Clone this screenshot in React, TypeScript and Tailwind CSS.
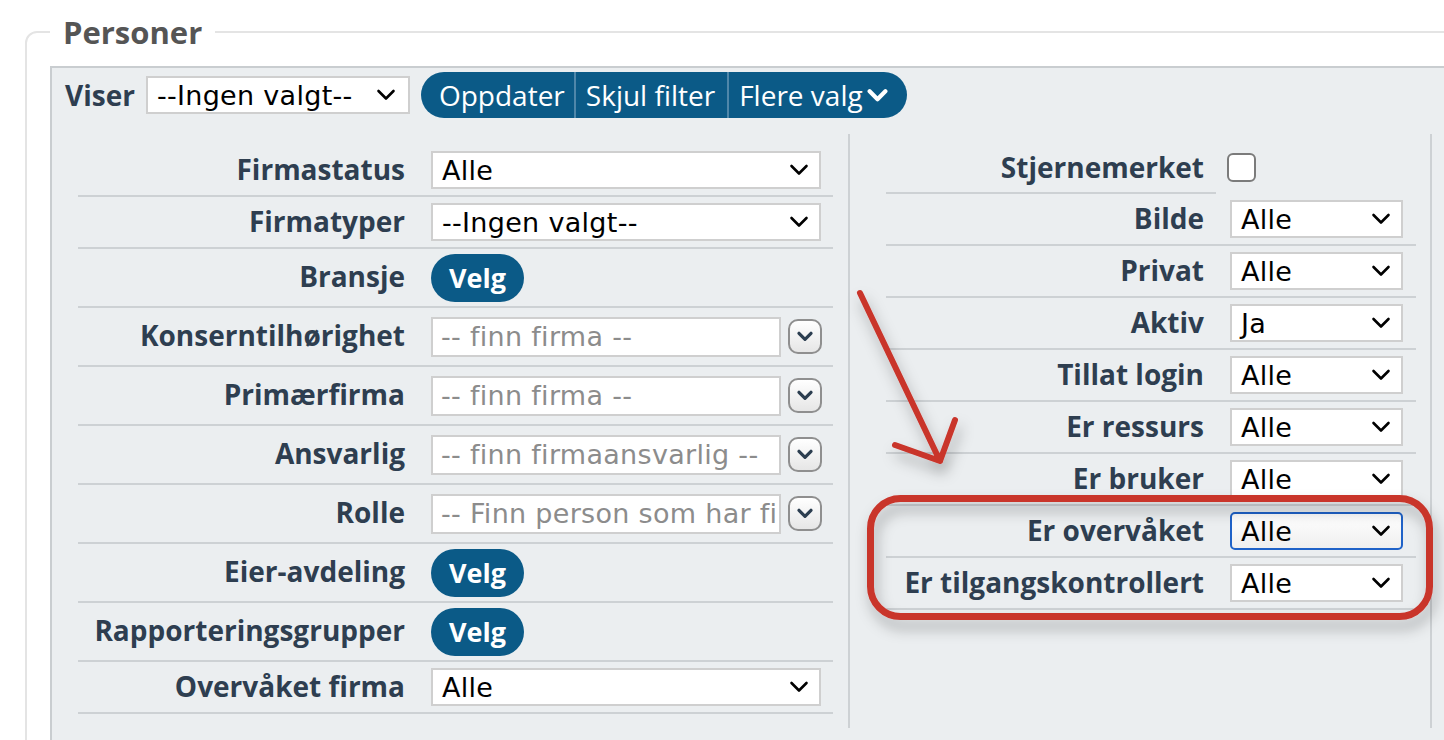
import type { ReactNode } from 'react'

type LeftRow =
  | { label: string; kind: 'select'; value: string }
  | { label: string; kind: 'velg' }
  | { label: string; kind: 'lookup'; value: string }

const leftRows: LeftRow[] = [
  { label: 'Firmastatus', kind: 'select', value: 'Alle' },
  { label: 'Firmatyper', kind: 'select', value: '--Ingen valgt--' },
  { label: 'Bransje', kind: 'velg' },
  { label: 'Konserntilhørighet', kind: 'lookup', value: '-- finn firma --' },
  { label: 'Primærfirma', kind: 'lookup', value: '-- finn firma --' },
  { label: 'Ansvarlig', kind: 'lookup', value: '-- finn firmaansvarlig --' },
  { label: 'Rolle', kind: 'lookup', value: '-- Finn person som har firmarolle --' },
  { label: 'Eier-avdeling', kind: 'velg' },
  { label: 'Rapporteringsgrupper', kind: 'velg' },
  { label: 'Overvåket firma', kind: 'select', value: 'Alle' },
]

const rightRows = [
  { label: 'Bilde', value: 'Alle' },
  { label: 'Privat', value: 'Alle' },
  { label: 'Aktiv', value: 'Ja' },
  { label: 'Tillat login', value: 'Alle' },
  { label: 'Er ressurs', value: 'Alle' },
  { label: 'Er bruker', value: 'Alle' },
  { label: 'Er overvåket', value: 'Alle', focused: true },
  { label: 'Er tilgangskontrollert', value: 'Alle' },
]

function Chevron({ className, width = 2.6 }: { className?: string; width?: number }) {
  return (
    <svg viewBox="0 0 20 12" className={className} fill="none" stroke="currentColor" strokeWidth={width} strokeLinecap="round" strokeLinejoin="round">
      <path d="M2.5 2l7.5 7.5L17.5 2" />
    </svg>
  )
}

function Dropdown({ value, className, focused }: { value: string; className: string; focused?: boolean }) {
  return (
    <div
      className={`flex items-center justify-between h-[38px] pl-[9px] pr-[10px] font-['DejaVu_Sans',sans-serif] text-[27px] tracking-[0.3px] text-black leading-none border-2 ${
        focused ? 'border-[#1f62c8] rounded-[5px] bg-gradient-to-b from-white to-[#efefef]' : 'border-[#cfcfcf] bg-white'
      } ${className}`}
    >
      <span className="whitespace-nowrap">{value}</span>
      <Chevron className="w-[20px] h-[12px] shrink-0" />
    </div>
  )
}

function VelgButton() {
  return (
    <button className="h-[48px] w-[93px] rounded-full bg-[#0b5a87] text-white font-bold text-[27px] leading-none">Velg</button>
  )
}

function Lookup({ value }: { value: string }) {
  return (
    <div className="flex items-center">
      <div className="w-[350px] h-[40px] border-2 border-[#cfcfcf] bg-white pl-[8px] flex items-center overflow-hidden whitespace-nowrap font-['DejaVu_Sans',sans-serif] text-[27px] tracking-[0.3px] text-[#8c8c8c] leading-none">
        {value}
      </div>
      <button className="ml-[7px] w-[34px] h-[35px] rounded-[10px] border-2 border-[#8f8f8f] bg-gradient-to-b from-white to-[#e6e6e6] flex items-center justify-center text-[#2c3e50]">
        <Chevron className="w-[16px] h-[11px]" width={4} />
      </button>
    </div>
  )
}

function Label({ children }: { children: ReactNode }) {
  return <span className="font-bold text-[28px] text-[#2e3e50] leading-none whitespace-nowrap">{children}</span>
}

export default function App() {
  return (
    <div className="relative h-[740px] w-[1444px] overflow-hidden bg-white font-['Open_Sans',sans-serif]">
      <fieldset className="mt-[15px] ml-[25px] w-[1460px] border-2 border-[#e4e4e4] rounded-[12px] pl-[23px] pt-[17px]">
        <legend className="px-[13px] text-[31px] font-bold text-[#555555] leading-[34px]">Personer</legend>

        <div className="w-[1420px] border-2 border-[#c9cdd0] bg-[#ebeef0] pb-[30px]">
          <div className="flex items-center pl-[13px] pt-[4px]">
            <Label>Viser</Label>
            <Dropdown value="--Ingen valgt--" className="ml-[11px] w-[264px] !pr-[12px]" />
            <div className="ml-[11px] flex h-[46px] items-stretch rounded-full bg-[#0b5a87] text-white text-[28px] leading-none">
              <span className="flex items-center pl-[18px] pr-[9px]">Oppdater</span>
              <span className="flex items-center border-l-2 border-[#4f87aa] pl-[10px] pr-[12px]">Skjul filter</span>
              <span className="flex items-center gap-[4px] border-l-2 border-[#4f87aa] pl-[10px] pr-[19px]">
                Flere valg
                <Chevron className="w-[21px] h-[13px]" width={4} />
              </span>
            </div>
          </div>

          <div className="mt-[16px] flex items-stretch">
            <div className="w-[798px] border-r-2 border-[#cdd1d4] pl-[26px] pr-[15px] pt-[11px] pb-[14px]">
              {leftRows.map((row) => (
                <div
                  key={row.label}
                  className={`flex items-center border-b-2 border-[#cdd1d4] ${row.kind === 'select' ? 'h-[52px]' : 'h-[59px]'}`}
                >
                  <div className="w-[340px] pr-[13px] text-right">
                    <Label>{row.label}</Label>
                  </div>
                  <div className="pl-[13px]">
                    {row.kind === 'select' && <Dropdown value={row.value} className="w-[390px]" />}
                    {row.kind === 'velg' && <VelgButton />}
                    {row.kind === 'lookup' && <Lookup value={row.value} />}
                  </div>
                </div>
              ))}
            </div>

            <div className="w-[582px] border-r-2 border-[#cdd1d4] pl-[36px] pr-[14px] pt-[8px]">
              <div className="flex h-[52px]">
                <div className="w-[330px] pr-[12px] border-b-2 border-[#cdd1d4] flex items-center justify-end">
                  <Label>Stjernemerket</Label>
                </div>
                <div className="flex items-center pl-[11px] pb-[2px]">
                  <div className="w-[29px] h-[29px] rounded-[6px] border-2 border-[#7b7b7b] bg-white" />
                </div>
              </div>
              {rightRows.map((row) => (
                <div key={row.label} className="flex h-[52px] items-center border-b-2 border-[#cdd1d4]">
                  <div className="w-[330px] pr-[12px] text-right">
                    <Label>{row.label}</Label>
                  </div>
                  <div className="pl-[14px]">
                    <Dropdown value={row.value} focused={row.focused} className="w-[173px]" />
                  </div>
                </div>
              ))}
            </div>
          </div>
        </div>
      </fieldset>

      {/* red callout drawn on top of the filter panel */}
      <svg className="pointer-events-none absolute inset-0" width={1444} height={740} viewBox="0 0 1444 740">
        <defs>
          <filter id="callout-shadow" x="-20%" y="-20%" width="140%" height="160%">
            <feDropShadow dx="3" dy="9" stdDeviation="7" floodColor="#000" floodOpacity="0.3" />
          </filter>
        </defs>
        <g fill="none" stroke="#c9342b" strokeLinecap="round" strokeLinejoin="round" filter="url(#callout-shadow)">
          <rect x={870.5} y={498.5} width={559} height={118} rx={30} strokeWidth={7} />
          <path d="M860 293L940 461M895 445L940 461L955 420" strokeWidth={6} />
        </g>
      </svg>
    </div>
  )
}
